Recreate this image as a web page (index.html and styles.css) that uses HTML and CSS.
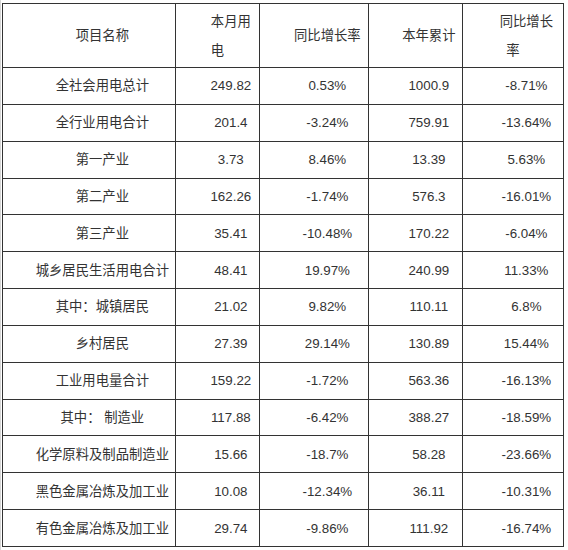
FILE: index.html
```html
<!DOCTYPE html>
<html lang="zh-CN">
<head>
    <meta charset="UTF-8">
    <title>全社会用电量统计</title>
    <link rel="stylesheet" href="styles.css">
</head>
<body>
    <div class="page">
        <table class="power">
            <colgroup>
                <col class="c-name">
                <col class="c-month">
                <col class="c-rate">
                <col class="c-year">
                <col class="c-yrate">
            </colgroup>
            <thead>
                <tr>
                    <td>项目名称</td>
                    <td>本月用电</td>
                    <td>同比增长率</td>
                    <td>本年累计</td>
                    <td>同比增长率</td>
                </tr>
            </thead>
            <tbody>
                <tr><td>全社会用电总计</td><td>249.82</td><td>0.53%</td><td>1000.9</td><td>-8.71%</td></tr>
                <tr><td>全行业用电合计</td><td>201.4</td><td>-3.24%</td><td>759.91</td><td>-13.64%</td></tr>
                <tr><td>第一产业</td><td>3.73</td><td>8.46%</td><td>13.39</td><td>5.63%</td></tr>
                <tr><td>第二产业</td><td>162.26</td><td>-1.74%</td><td>576.3</td><td>-16.01%</td></tr>
                <tr><td>第三产业</td><td>35.41</td><td>-10.48%</td><td>170.22</td><td>-6.04%</td></tr>
                <tr><td>城乡居民生活用电合计</td><td>48.41</td><td>19.97%</td><td>240.99</td><td>11.33%</td></tr>
                <tr><td>其中：城镇居民</td><td>21.02</td><td>9.82%</td><td>110.11</td><td>6.8%</td></tr>
                <tr><td>乡村居民</td><td>27.39</td><td>29.14%</td><td>130.89</td><td>15.44%</td></tr>
                <tr><td>工业用电量合计</td><td>159.22</td><td>-1.72%</td><td>563.36</td><td>-16.13%</td></tr>
                <tr><td>其中： 制造业</td><td>117.88</td><td>-6.42%</td><td>388.27</td><td>-18.59%</td></tr>
                <tr><td>化学原料及制品制造业</td><td>15.66</td><td>-18.7%</td><td>58.28</td><td>-23.66%</td></tr>
                <tr><td>黑色金属冶炼及加工业</td><td>10.08</td><td>-12.34%</td><td>36.11</td><td>-10.31%</td></tr>
                <tr><td>有色金属冶炼及加工业</td><td>29.74</td><td>-9.86%</td><td>111.92</td><td>-16.74%</td></tr>
            </tbody>
        </table>
    </div>
</body>
</html>
```

FILE: styles.css
```css
body {
    margin: 0;
    font-family: "Liberation Sans", "Noto Sans CJK SC", sans-serif;
    font-size: 13.33px;
    color: #333;
    background: #fff;
}
.page {
    height: 550px;
    box-sizing: border-box;
    border-left: 1px solid #d6d6d6;
    padding: 3px 0 0 1px;
}
.power {
    border-collapse: collapse;
    table-layout: fixed;
    width: 562px;
}
.c-name { width: 173px; }
.c-month { width: 84px; }
.c-rate { width: 109px; }
.c-year { width: 94px; }
.c-yrate { width: 101px; }
.power td {
    border: 1px solid #333;
    padding: 0 5px;
    text-align: center;
    text-indent: 2em;
    line-height: 29px;
    vertical-align: middle;
}
.power thead td {
    height: 63px;
}
.power tbody td {
    height: 35.85px;
}
```
